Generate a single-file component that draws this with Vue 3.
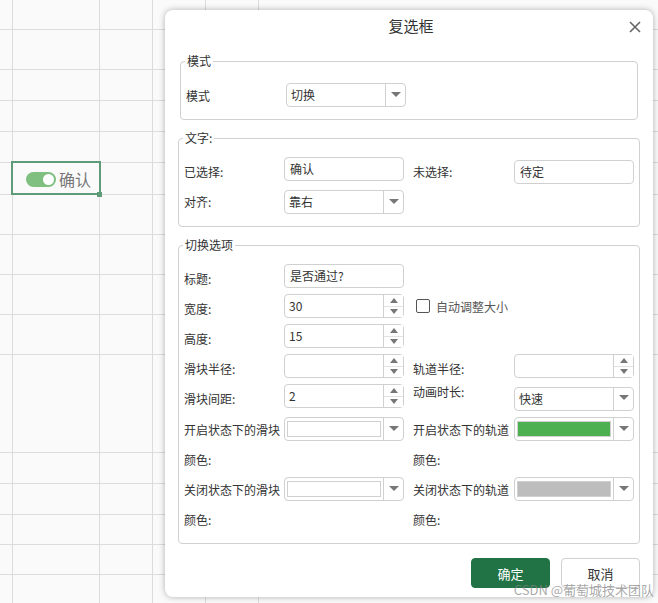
<script setup>
const colLines = [12, 99, 152, 205, 258]
const rowLines = [29, 69, 100, 131, 162, 194, 234, 274, 314, 354, 452, 483, 514, 544, 574]
</script>

<template>
  <div class="page">
    <div class="sheet">
      <i v-for="x in colLines" :key="'c' + x" class="vline" :style="{ left: x + 'px' }"></i>
      <i v-for="y in rowLines" :key="'r' + y" class="hline" :style="{ top: y + 'px' }"></i>
      <div class="cell">
        <span class="toggle"><span class="knob"></span></span>
        <span class="cell-text">确认</span>
        <span class="handle"></span>
      </div>
    </div>

    <div class="dialog">
      <div class="title">复选框</div>
      <svg class="close" viewBox="0 0 12 12" width="12" height="12">
        <path d="M1 1L11 11M11 1L1 11" stroke="#666" stroke-width="1.6" fill="none" />
      </svg>

      <fieldset class="group g-mode">
        <legend>模式</legend>
        <div class="row">
          <label class="lab w-mode low1">模式</label>
          <div class="ctl sel w-m"><span class="val">切换</span><span class="drop"><b class="down"></b></span></div>
        </div>
      </fieldset>

      <fieldset class="group g-text">
        <legend>文字:</legend>
        <div class="row">
          <label class="lab w-l">已选择:</label>
          <div class="ctl inp w-m up3"><span class="val v5">确认</span></div>
          <label class="lab w-r">未选择:</label>
          <div class="ctl inp w-m"><span class="val v5">待定</span></div>
        </div>
        <div class="row">
          <label class="lab w-l">对齐:</label>
          <div class="ctl sel w-m"><span class="val">靠右</span><span class="drop"><b class="down"></b></span></div>
        </div>
      </fieldset>

      <fieldset class="group g-opt">
        <legend>切换选项</legend>
        <div class="row">
          <label class="lab w-l low3">标题:</label>
          <div class="ctl inp w-m"><span class="val v5">是否通过?</span></div>
        </div>
        <div class="row">
          <label class="lab w-l low3">宽度:</label>
          <div class="ctl spin w-m"><span class="val">30</span><span class="arrows"><b class="up"></b><b class="down"></b></span></div>
          <label class="check"><span class="box"></span><span>自动调整大小</span></label>
        </div>
        <div class="row">
          <label class="lab w-l low3">高度:</label>
          <div class="ctl spin w-m"><span class="val">15</span><span class="arrows"><b class="up"></b><b class="down"></b></span></div>
        </div>
        <div class="row">
          <label class="lab w-l low3">滑块半径:</label>
          <div class="ctl spin w-m"><span class="val"></span><span class="arrows"><b class="up"></b><b class="down"></b></span></div>
          <label class="lab w-r low3">轨道半径:</label>
          <div class="ctl spin w-m"><span class="val"></span><span class="arrows"><b class="up"></b><b class="down"></b></span></div>
        </div>
        <div class="row">
          <label class="lab w-l low3">滑块间距:</label>
          <div class="ctl spin w-m"><span class="val">2</span><span class="arrows"><b class="up"></b><b class="down"></b></span></div>
          <label class="lab w-r raise">动画时长:</label>
          <div class="ctl sel w-m down3"><span class="val">快速</span><span class="drop"><b class="down"></b></span></div>
        </div>
        <div class="row color-row">
          <div class="lab w-l wrap">开启状态下的滑块<br /><span class="second">颜色:</span></div>
          <div class="ctl sel w-m"><span class="swatch white"></span><span class="drop"><b class="down"></b></span></div>
          <div class="lab w-r wrap">开启状态下的轨道<br /><span class="second">颜色:</span></div>
          <div class="ctl sel w-m"><span class="swatch green"></span><span class="drop"><b class="down"></b></span></div>
        </div>
        <div class="row color-row">
          <div class="lab w-l wrap">关闭状态下的滑块<br /><span class="second">颜色:</span></div>
          <div class="ctl sel w-m"><span class="swatch white"></span><span class="drop"><b class="down"></b></span></div>
          <div class="lab w-r wrap">关闭状态下的轨道<br /><span class="second">颜色:</span></div>
          <div class="ctl sel w-m"><span class="swatch gray"></span><span class="drop"><b class="down"></b></span></div>
        </div>
      </fieldset>

      <div class="footer">
        <button class="btn primary">确定</button>
        <button class="btn">取消</button>
      </div>
    </div>

    <div class="watermark">CSDN @葡萄城技术团队</div>
  </div>
</template>

<style>
html, body { margin: 0; padding: 0; background: #fafafa; overflow: hidden; }
</style>

<style scoped>
.page {
  width: 658px;
  height: 603px;
  position: relative;
  overflow: hidden;
  background: #fafafa;
  font-family: "Noto Sans CJK SC", "Liberation Sans", sans-serif;
  font-size: 12px;
  color: #333;
}
.sheet { position: absolute; inset: 0; }
.vline { position: absolute; top: 0; bottom: 0; width: 1px; background: #dcdcdc; }
.hline { position: absolute; left: 0; right: 0; height: 1px; background: #dcdcdc; }
.cell {
  position: absolute;
  left: 11px;
  top: 161px;
  width: 90px;
  height: 34px;
  box-sizing: border-box;
  border: 2px solid #5f9b78;
  display: flex;
  align-items: center;
  padding: 2px 0 0 13px;
  gap: 3px;
}
.toggle {
  width: 30px;
  height: 15px;
  border-radius: 8px;
  background: #7fc080;
  position: relative;
}
.knob {
  position: absolute;
  right: 2px;
  top: 2px;
  width: 11px;
  height: 11px;
  border-radius: 50%;
  background: #fff;
}
.cell-text { font-size: 16px; color: #777; }
.handle {
  position: absolute;
  right: -3px;
  bottom: -4px;
  width: 5px;
  height: 5px;
  background: #5f9b78;
}

.dialog {
  position: absolute;
  left: 165px;
  top: 10px;
  width: 488px;
  height: 587px;
  box-sizing: border-box;
  background: #fff;
  border-radius: 8px;
  box-shadow: 0 0 6px rgba(0, 0, 0, 0.3);
  display: flex;
  flex-direction: column;
}
.title {
  height: 37px;
  line-height: 32px;
  padding-left: 4px;
  text-align: center;
  font-size: 15px;
  color: #333;
}
.close { position: absolute; right: 12px; top: 11px; }

.group {
  margin: 0;
  padding: 0;
  box-sizing: border-box;
  border: 1px solid #d0d0d0;
  border-radius: 4px;
  min-width: 0;
}
.group legend {
  padding: 0 2px;
  margin-left: -1px;
  font-size: 12px;
  line-height: 16px;
  color: #333;
}
.g-mode { margin: 6px 15px 0 15px; height: 67px; padding: 11px 0 0 5px; }
.g-text { margin: 10px 13px 0 13px; height: 97px; padding: 11px 0 0 5px; }
.g-opt { margin: 10px 13px 0 13px; height: 307px; padding: 8px 0 0 5px; }

.row { display: flex; align-items: center; height: 30px; }
.lab { display: block; line-height: 18px; color: #333; }
.low1 { margin-top: 2px; }
.low3 { margin-top: 6px; }
.w-mode { width: 100px; flex: none; }
.w-l { width: 100px; flex: none; }
.w-r { width: 101px; flex: none; margin-left: 9px; }
.raise { margin-top: -8px; }
.w-m { width: 120px; flex: none; }

.ctl {
  height: 24px;
  box-sizing: border-box;
  border: 1px solid #d0d0d0;
  border-radius: 4px;
  display: flex;
  align-items: stretch;
  background: #fff;
}
.up3 { margin-top: -6px; }
.down3 { margin-top: 5px; }
.val { flex: 1; padding-left: 4px; line-height: 22px; color: #333; min-width: 0; }
.v5 { padding-left: 5px; }
.drop {
  width: 19px;
  flex: none;
  border-left: 1px solid #d0d0d0;
  display: flex;
  align-items: center;
  justify-content: center;
}
.arrows {
  width: 19px;
  flex: none;
  border-left: 1px solid #d0d0d0;
  display: flex;
  flex-direction: column;
  align-items: center;
  justify-content: center;
  gap: 6px;
  background: linear-gradient(#fff 0 50%, #e2e2e2 50% calc(50% + 1px), #fff calc(50% + 1px));
}
.down, .up { display: block; width: 0; height: 0; border-left: 4px solid transparent; border-right: 4px solid transparent; }
.down { border-top: 5px solid #777; }
.up { border-bottom: 5px solid #777; }
.drop .down { border-left-width: 5px; border-right-width: 5px; margin-top: -2px; }

.check { margin-left: 12px; display: flex; align-items: center; gap: 6px; color: #555; }
.box {
  width: 12px;
  height: 12px;
  border: 1px solid #555;
  border-radius: 2px;
  display: block;
}
.color-row { height: 60px; align-items: flex-start; padding-top: 6px; box-sizing: border-box; }
.wrap { line-height: 18px; white-space: nowrap; padding-top: 4px; }
.second { display: inline-block; margin-top: 12px; }
.swatch {
  flex: 1;
  margin: 3px 2px;
  border: 1px solid #d0d0d0;
  box-sizing: border-box;
}
.white { background: #fff; }
.green { background: #4caf50; }
.gray { background: #bdbdbd; }

.footer { display: flex; justify-content: flex-end; gap: 11px; padding: 14px 13px 0 0; }
.btn {
  width: 79px;
  height: 30px;
  box-sizing: border-box;
  border: 1px solid #d0d0d0;
  border-radius: 4px;
  background: #fff;
  color: #333;
  font: inherit;
  font-size: 13px;
  padding: 0;
}
.primary { background: #217346; border-color: #217346; color: #fff; }

.watermark {
  position: absolute;
  right: 4px;
  top: 581px;
  font-size: 13px;
  line-height: 18px;
  color: rgba(130, 130, 130, 0.7);
  white-space: nowrap;
}
</style>
